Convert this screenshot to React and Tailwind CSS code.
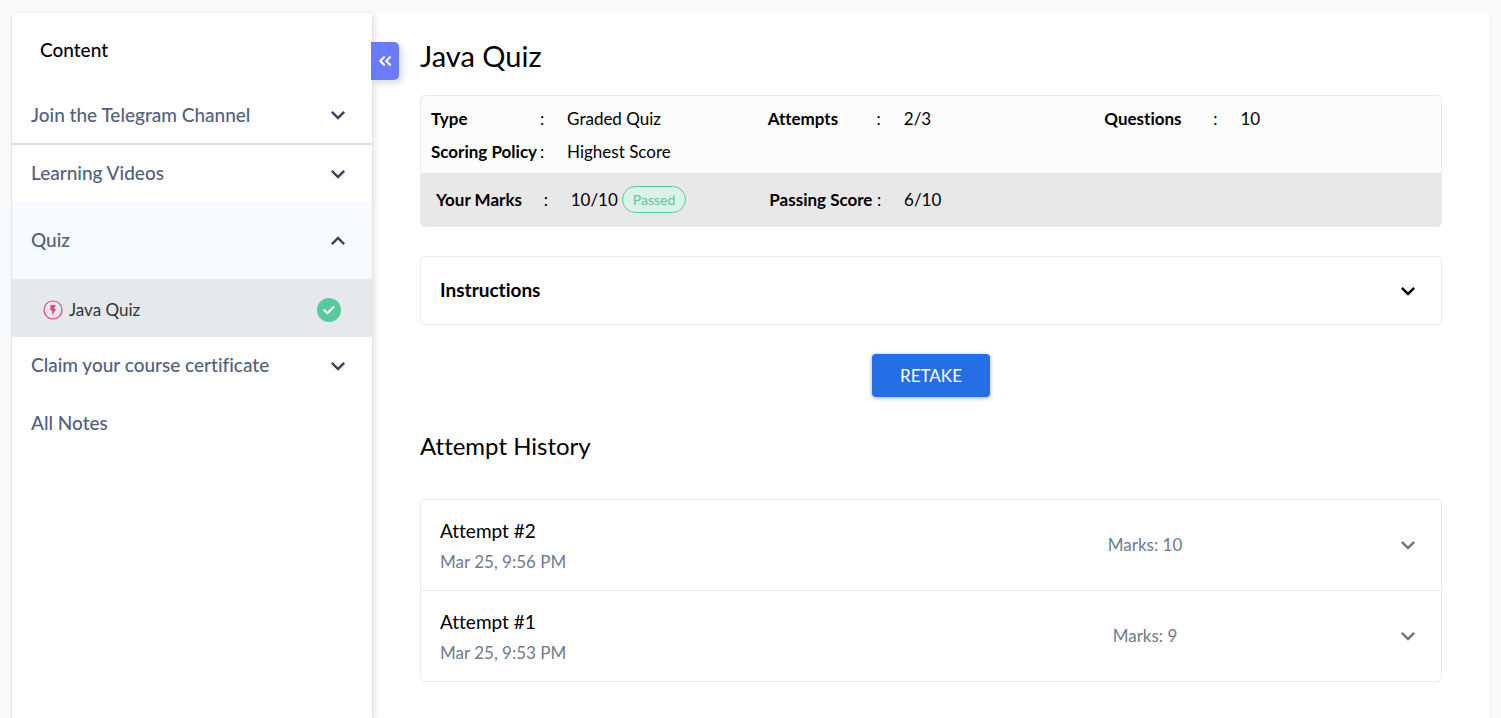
import { MdExpandLess, MdExpandMore } from "react-icons/md";

const sections = [
  { title: "Join the Telegram Channel", divided: true },
  { title: "Learning Videos" },
  { title: "Quiz", open: true, lessons: ["Java Quiz"] },
  { title: "Claim your course certificate" },
];

const attempts = [
  { name: "Attempt #2", date: "Mar 25, 9:56 PM", marks: 10 },
  { name: "Attempt #1", date: "Mar 25, 9:53 PM", marks: 9 },
];

function FlashIcon() {
  return (
    <svg className="size-5 shrink-0" viewBox="0 0 20 20" fill="none" aria-hidden="true">
      <circle cx="10" cy="10" r="9" stroke="#e8417c" strokeWidth="1.2" />
      <path d="M7.4 5h5.2l-1.5 3.9h2L9.2 15.2V10.4H7.4z" fill="#e8417c" />
    </svg>
  );
}

function CheckIcon() {
  return (
    <svg className="size-3" viewBox="0 0 12 12" fill="none" stroke="currentColor" strokeWidth="2" aria-hidden="true">
      <path d="m1.4 6.2 3 3 6.2-6.2" strokeLinecap="round" strokeLinejoin="round" />
    </svg>
  );
}

function DoubleChevronLeft() {
  return (
    <svg className="h-3 w-4" viewBox="0 0 16 12" fill="none" stroke="currentColor" strokeWidth="2.2" aria-hidden="true">
      <path
        d="M7 2.2 3.2 6 7 9.8M13 2.2 9.2 6 13 9.8"
        strokeLinecap="round"
        strokeLinejoin="round"
      />
    </svg>
  );
}

function Fact({ label, children }) {
  return (
    <div className="grid grid-cols-12 px-[5px]">
      <dt className="col-span-4 font-bold whitespace-nowrap">{label}</dt>
      <dd>:</dd>
      <dd className="col-span-7 flex items-center gap-1">{children}</dd>
    </div>
  );
}

function Sidebar() {
  return (
    <aside className="relative w-[360px] shrink-0 rounded-tl bg-white shadow-[3px_2px_6px_rgba(0,0,0,0.1),0_1px_2px_rgba(0,0,0,0.12)]">
      <h2 className="px-7 pt-6 pb-6 text-[19px] leading-[26px] font-medium text-black">Content</h2>
      <nav aria-label="Course content" className="text-[19px] font-medium text-[#52617d]">
        {sections.map((s) => (
          <div key={s.title}>
            <button
              type="button"
              aria-expanded={Boolean(s.open)}
              className={
                "flex w-full items-center justify-between pr-5 pl-[19px] text-left " +
                (s.open ? "h-[77px] bg-[#f7fbff]" : s.divided ? "h-[58px] border-b-2 border-[#dedede]" : "h-[57px]")
              }
            >
              {s.title}
              {s.open ? (
                <MdExpandLess className="size-7 text-[#344563]" />
              ) : (
                <MdExpandMore className="size-7 text-[#344563]" />
              )}
            </button>
            {s.lessons?.map((l) => (
              <a
                key={l}
                href="#java-quiz"
                className="flex h-[58px] items-center justify-between bg-[#e5e8ed] pt-1 pr-[31px] pb-px pl-[31px] text-[17px] font-normal text-[#333]"
              >
                <span className="flex items-center gap-[6px]">
                  <FlashIcon />
                  {l}
                </span>
                <span className="flex size-6 items-center justify-center rounded-full bg-[#58c99b] text-white">
                  <CheckIcon />
                </span>
              </a>
            ))}
          </div>
        ))}
        <a href="#notes" className="flex h-[58px] items-center pl-[19px]">
          All Notes
        </a>
      </nav>
      <button
        type="button"
        aria-label="Collapse sidebar"
        className="absolute top-[29px] -right-[27px] flex h-[38px] w-7 items-center justify-center rounded-r-[5px] bg-[#6a7cfb] text-white shadow-[3px_3px_7px_rgba(0,0,0,0.15)]"
      >
        <DoubleChevronLeft />
      </button>
    </aside>
  );
}

export default function App() {
  return (
    <div className="flex h-screen flex-col overflow-hidden bg-[#f8fafc] pt-[13px] pr-[11px] pl-3 font-['Lato',sans-serif] text-black [font-variant-ligatures:none]">
      <div className="flex grow rounded-t bg-white shadow-[0_1px_2px_rgba(0,0,0,0.14)]">
        <Sidebar />
        <main className="min-w-0 grow px-12 pt-[23px]">
          <h1 className="text-[29px] leading-10">Java Quiz</h1>
          <section className="mt-[19px] overflow-hidden rounded-[5px] border border-[#ebebeb] bg-[#fcfcfc] text-[17px] leading-[27px]">
            <dl className="grid grid-cols-3 gap-y-[6px] px-[5px] pt-[9px] pb-2">
              <Fact label="Type">Graded Quiz</Fact>
              <Fact label="Attempts">2/3</Fact>
              <Fact label="Questions">10</Fact>
              <Fact label="Scoring Policy">Highest Score</Fact>
            </dl>
            <dl className="grid grid-cols-3 bg-[#e8e8e8] px-[10px] py-[13px]">
              <Fact label="Your Marks">
                10/10
                <span className="rounded-full border border-[#58c99b] bg-[#daf2e8] px-[10px] text-[14px] leading-[25px] text-[#58c99b]">
                  Passed
                </span>
              </Fact>
              <Fact label="Passing Score">6/10</Fact>
            </dl>
          </section>
          <button
            type="button"
            aria-expanded="false"
            className="mt-[29px] flex h-[69px] w-full items-center justify-between rounded-[5px] border border-[#ebebf0] px-[19px] text-[19px] font-bold"
          >
            Instructions
            <MdExpandMore className="size-7" />
          </button>
          <div className="mt-[29px] flex justify-center">
            <button
              type="button"
              className="h-[43px] rounded bg-[#246fe5] px-7 text-[17px] text-white shadow-[0_1px_4px_rgba(0,0,0,0.35)]"
            >
              RETAKE
            </button>
          </div>
          <h2 className="mt-[33px] text-2xl">Attempt History</h2>
          <div className="mt-[37px] divide-y divide-[#ebebeb] rounded-[5px] border border-[#ebebeb]">
            {attempts.map((a) => (
              <button
                key={a.name}
                type="button"
                aria-expanded="false"
                className="flex w-full items-center gap-[14px] px-[19px] text-left"
              >
                <span className="grid grow grid-cols-2 items-center text-[17px] text-[#6f7b8f]">
                  <span className="flex flex-col pt-4 pb-3">
                    <span className="text-[19px] leading-[30px] text-black">{a.name}</span>
                    <span className="leading-8">{a.date}</span>
                  </span>
                  <span className="text-center">Marks: {a.marks}</span>
                </span>
                <MdExpandMore className="size-7 text-[#757575]" />
              </button>
            ))}
          </div>
        </main>
      </div>
    </div>
  );
}
